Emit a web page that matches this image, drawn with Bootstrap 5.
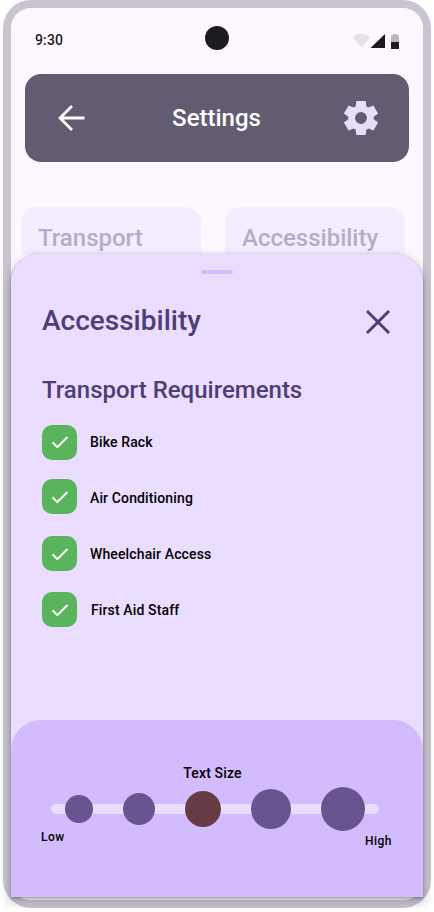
<!DOCTYPE html>
<html lang="en">
<head>
<meta charset="utf-8">
<meta name="viewport" content="width=device-width, initial-scale=1">
<title>Settings</title>
<link href="https://cdn.jsdelivr.net/npm/bootstrap@5.3.0/dist/css/bootstrap.min.css" rel="stylesheet">
<style>
body{background:#fff;font-family:Roboto,"Liberation Sans",sans-serif;font-weight:500;overflow:hidden}
.phone{width:428px;height:908px;margin-left:3px;border:8px solid #cac4d0;border-radius:28px;background:#fef7ff}
.statusbar{height:66px;padding:8px 24px 0;font-size:14px;line-height:20px;letter-spacing:.14px;color:#1d1b20}
.statusbar>*{flex:1 1 0}
.statusbar .camera{flex:0 0 24px;height:24px;margin-top:10px;border-radius:50%;background:#1d1b20}
.clock{margin-top:14px}
.sys{margin-top:13px}
.topbar{height:88px;margin:0 14px;padding:0 31px;border-radius:16px;background:#625b71;color:#fff}
.topbar h1{font-size:24px;line-height:32px;font-weight:500;margin:0 0 0 4px}
.tiles{margin:45px 18px 0 10px;gap:24px;height:46px}
.tile{flex:1;height:47px;padding:15px 17px 0;border-radius:16px 16px 0 0;background:#f5edff;color:#b6acc9;font-size:24px;line-height:32px}
.sheet{position:relative;height:643.500px;margin-top:.5px;border-radius:28px 28px 0 0;background:#eaddff;box-shadow:0 1px 3px rgba(0,0,0,.3),0 4px 8px 3px rgba(0,0,0,.15);color:#000}
.grip{width:32px;height:4px;margin:16.500px auto 0;border-radius:2px;background:#d3bcfd}
.sheet h2,.sheet h3{color:#4f3d74;font-weight:500}
.sheet h2{font-size:28px;line-height:36px;margin:0 0 2px}
.sheet h3{font-size:24px;line-height:32px}
.head{margin-top:29px;padding:0 32px 0 31px}
.reqs{padding:33px 31px 0}
.checks{margin-top:8px}
.req{height:56px;font-size:14px;line-height:20px;letter-spacing:.13px;gap:13px}
.tick{width:35px;height:35px;border-radius:10px;background:#5ab45b}
.tick.up{margin-bottom:1px}
.tick.up-more{margin-bottom:3px}
.nudge{margin-left:1px}
.sizes{height:177px;border-radius:30px 30px 0 0;background:#d3bcfd;padding:43px 31px 0 30px;font-size:14px;line-height:20px}
.size-title{letter-spacing:.14px;margin-right:8px}
.track{height:10px;margin:21px 13px 0 10px;padding:0 14px;border-radius:5px;background:#eaddff}
.dot{flex:none;border-radius:50%;background:#68548e}
.dot.on{background:#663b43}
.ends{font-size:12px;line-height:16px;letter-spacing:.5px;margin-top:15px}
</style>
</head>
<body>
<div class="phone d-flex flex-column">
  <div class="statusbar d-flex align-items-start">
    <span class="clock">9:30</span>
    <span class="camera"></span>
    <span class="sys d-flex justify-content-end">
      <svg width="46" height="20" viewBox="0 0 46 20">
        <path d="M0 8.500C4.500 3.500 12.500 3.500 17 8.500L8.500 18.400Z" fill="#e7e0e8"/>
        <path d="M17.500 19 32 5v14Z" fill="#1d1b20"/>
        <path d="M38 7q0-1 1-1h1V5h4v1h1q1 0 1 1v6h-8Z" fill="#bbb6bd"/>
        <path d="M38 13h8v6.500q0 .5-.5.5h-7q-.5 0-.5-.5Z" fill="#1d1b20"/>
      </svg>
    </span>
  </div>
  <header class="topbar d-flex align-items-center justify-content-between">
    <svg width="29" height="28" viewBox="0 0 29 28" fill="none" stroke="#fff" stroke-width="2.800"><path d="M16 2 4 14l12 12M4 14H28.500"/></svg>
    <h1>Settings</h1>
    <svg class="overflow-visible" width="34" height="34" viewBox="2 2 20 20"><path fill="#e8def8" fill-rule="evenodd" d="M9.250 22l-.4-3.200q-.6-.25-1.175-.675L4.700 19.375l-2.750-4.750 2.575-1.950q-.05-.675 0-1.350L1.950 9.375l2.750-4.750 2.975 1.250q.575-.425 1.175-.675l.4-3.200h5.500l.4 3.200q.6.25 1.175.675l2.975-1.250 2.750 4.750-2.575 1.950q.05.675 0 1.350l2.575 1.950-2.750 4.750-2.975-1.250q-.575.425-1.175.675l-.4 3.200ZM12 8.500a3.500 3.500 0 1 0 0 7 3.500 3.500 0 0 0 0-7Z"/></svg>
  </header>
  <div class="tiles d-flex">
    <div class="tile">Transport</div>
    <div class="tile">Accessibility</div>
  </div>
  <section class="sheet flex-shrink-0 d-flex flex-column">
    <div class="grip flex-shrink-0"></div>
    <div class="head d-flex align-items-center justify-content-between">
      <h2>Accessibility</h2>
      <svg width="26" height="26" viewBox="0 0 26 26" fill="none" stroke="#4f3d74" stroke-width="3"><path d="m2 2 22 22M24 2 2 24"/></svg>
    </div>
    <div class="reqs">
      <h3 class="m-0">Transport Requirements</h3>
      <div class="checks">
        <div class="req d-flex align-items-center"><span class="tick d-flex align-items-center justify-content-center"><svg width="18" height="14" viewBox="0 0 18 14" fill="none" stroke="#fff" stroke-width="2"><path d="m1.500 7.300 4.800 4.800L16.500 2"/></svg></span>Bike Rack</div>
        <div class="req d-flex align-items-center"><span class="tick up-more d-flex align-items-center justify-content-center"><svg width="18" height="14" viewBox="0 0 18 14" fill="none" stroke="#fff" stroke-width="2"><path d="m1.500 7.300 4.800 4.800L16.500 2"/></svg></span>Air Conditioning</div>
        <div class="req d-flex align-items-center"><span class="tick up d-flex align-items-center justify-content-center"><svg width="18" height="14" viewBox="0 0 18 14" fill="none" stroke="#fff" stroke-width="2"><path d="m1.500 7.300 4.800 4.800L16.500 2"/></svg></span>Wheelchair Access</div>
        <div class="req d-flex align-items-center"><span class="tick up d-flex align-items-center justify-content-center"><svg width="18" height="14" viewBox="0 0 18 14" fill="none" stroke="#fff" stroke-width="2"><path d="m1.500 7.300 4.800 4.800L16.500 2"/></svg></span><span class="nudge">First Aid Staff</span></div>
      </div>
    </div>
    <div class="sizes mt-auto">
      <div class="size-title text-center">Text Size</div>
      <div class="track d-flex align-items-center justify-content-between">
        <span class="dot" style="width:28px;height:28px"></span>
        <span class="dot" style="width:32px;height:32px"></span>
        <span class="dot on" style="width:36px;height:36px"></span>
        <span class="dot" style="width:40px;height:40px"></span>
        <span class="dot" style="width:44px;height:44px"></span>
      </div>
      <div class="ends d-flex justify-content-between"><span>Low</span><span class="mt-1">High</span></div>
    </div>
  </section>
</div>
<script src="https://cdn.jsdelivr.net/npm/bootstrap@5.3.0/dist/js/bootstrap.bundle.min.js"></script>
</body>
</html>
